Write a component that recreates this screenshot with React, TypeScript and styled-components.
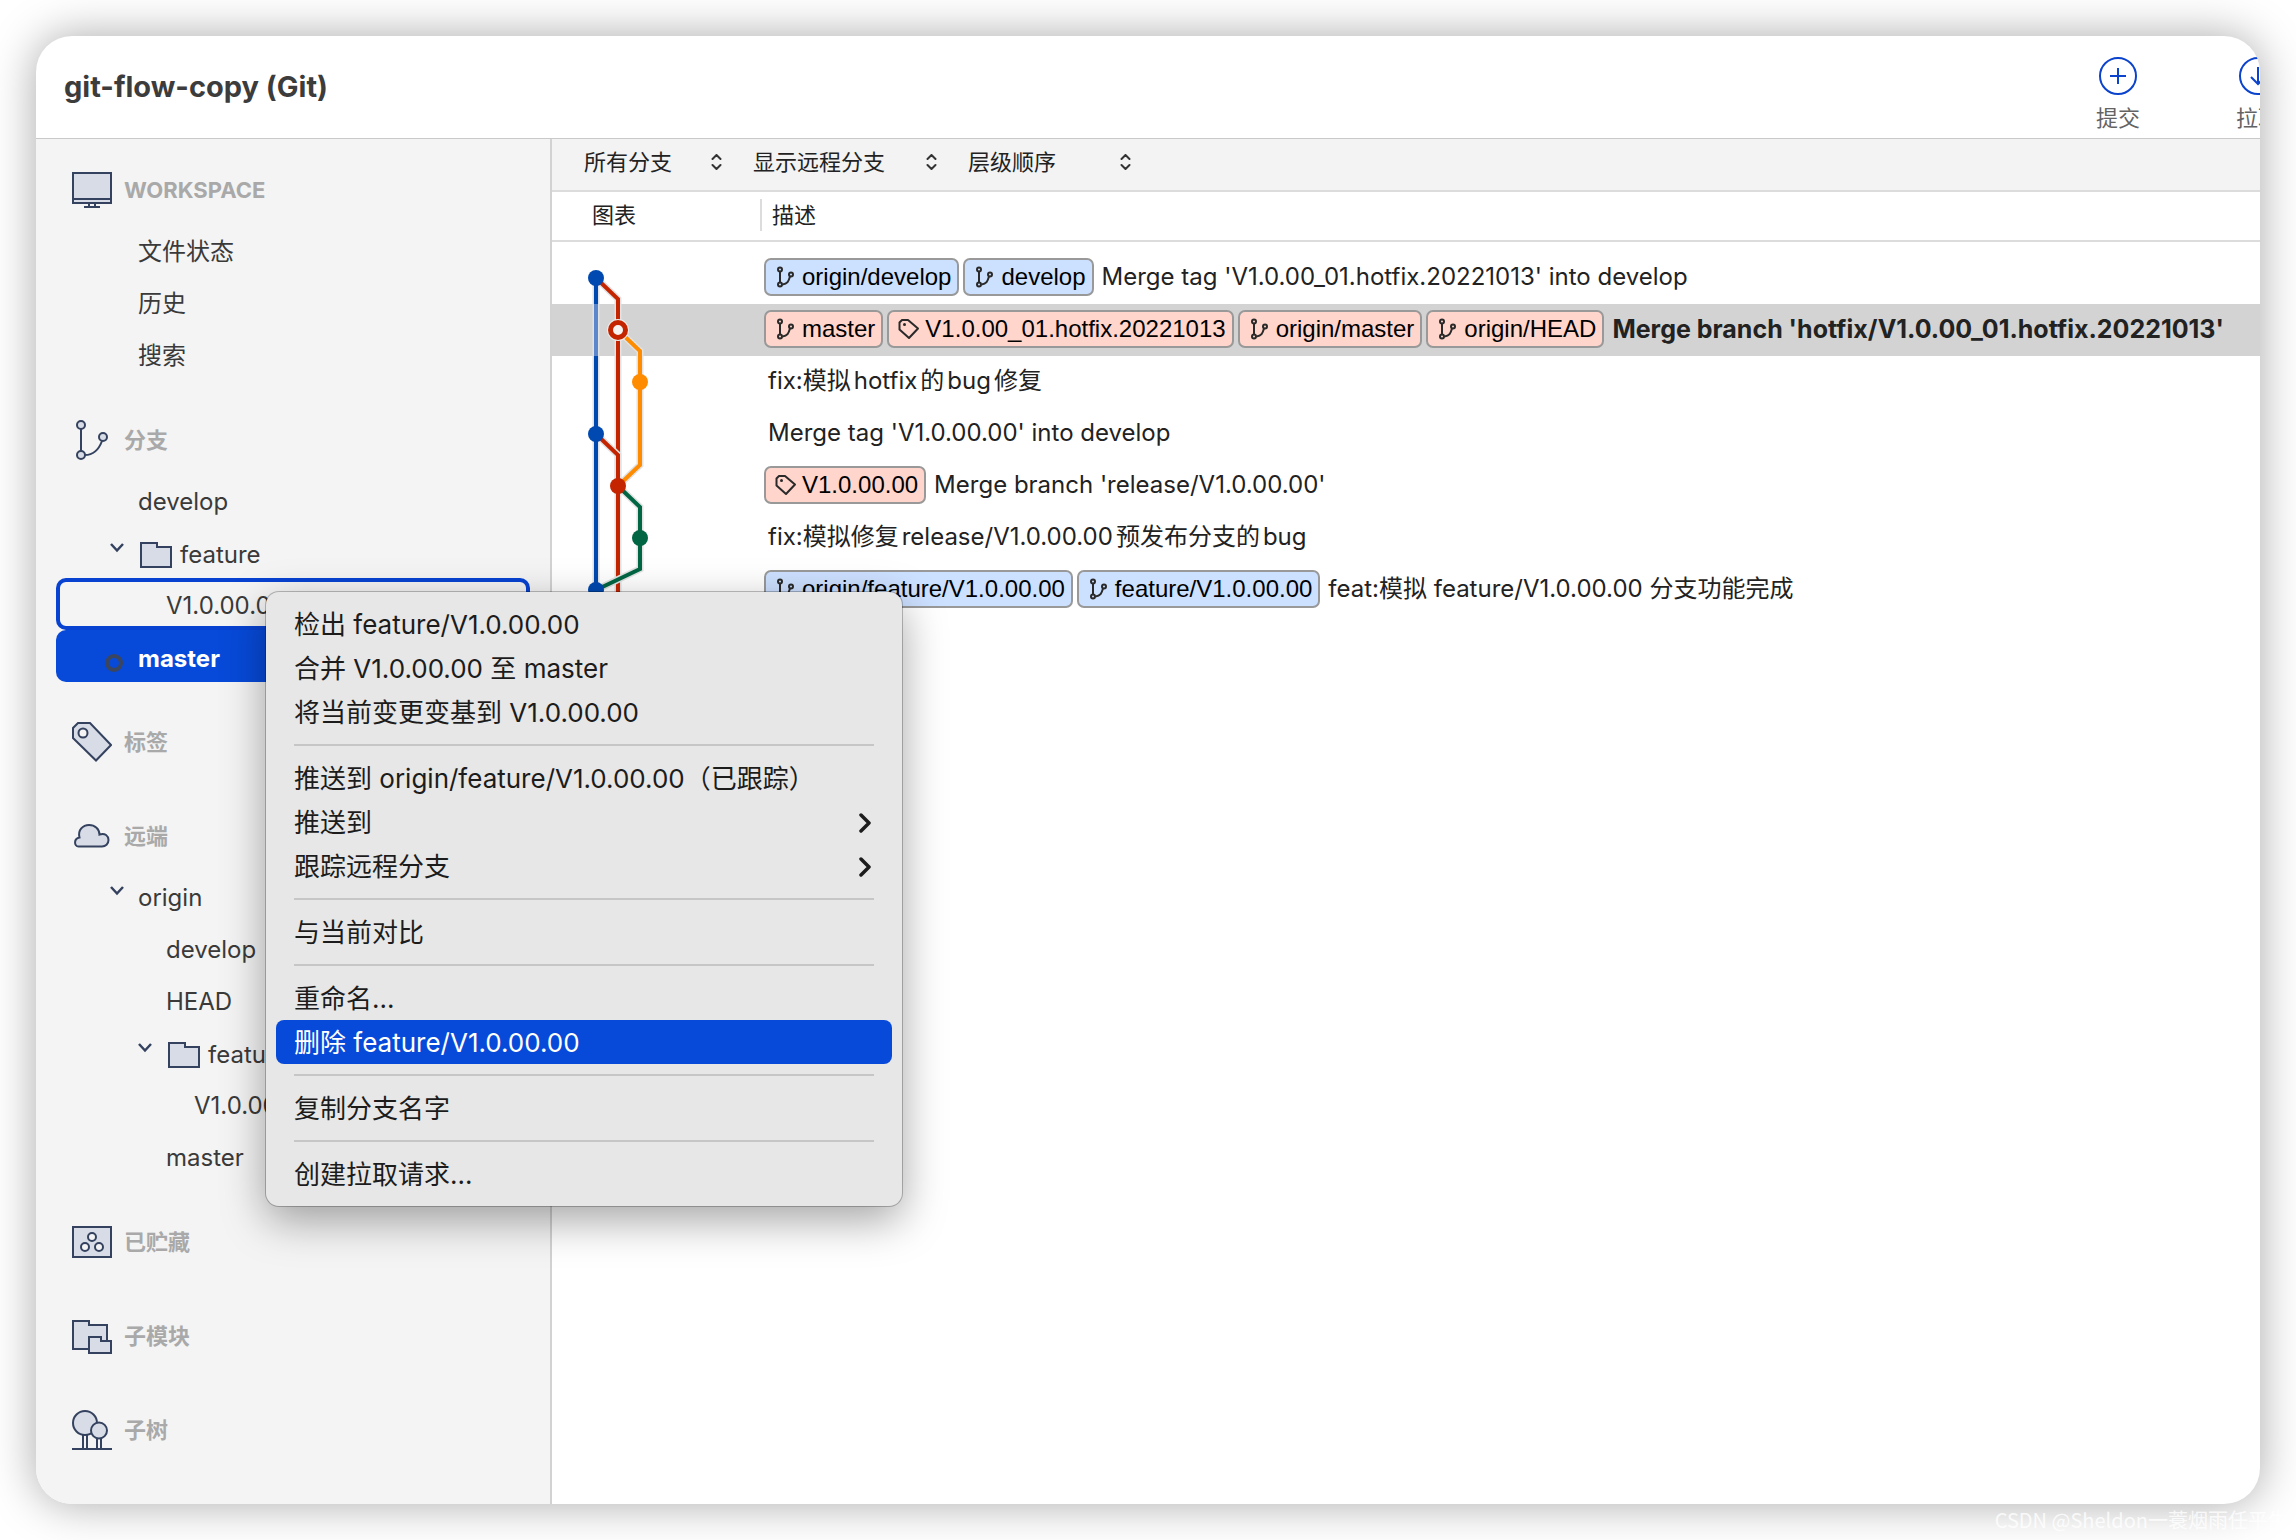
import React from "react";
import styled, { createGlobalStyle, css } from "styled-components";

const uiFont = `Inter, "Noto Sans CJK SC", sans-serif`;
const badgeFont = `"Liberation Sans", Arial, "Noto Sans CJK SC", sans-serif`;

const color = {
  blue: "#074ad9",
  outline: "#0742d1",
  iconStroke: "#34425f",
  iconFill: "#d8dce6",
  panel: "#f4f4f4",
  line: "#dcdcdc",
  graphBlue: "#0049b0",
  graphRed: "#c42500",
  graphOrange: "#ff8b00",
  graphGreen: "#006644",
};

const GlobalStyle = createGlobalStyle`
  *, *::before, *::after { box-sizing: border-box; }
  body { margin: 0; background: #fff; font-family: ${uiFont}; overflow-x: hidden; }
  button, select { font: inherit; color: inherit; border: 0; background: none; margin: 0; padding: 0; }
  ul { list-style: none; margin: 0; padding: 0; }
`;

const Page = styled.div`
  position: relative;
  min-height: 100vh;
  padding: 36px;
  display: flex;
`;

const Window = styled.div`
  position: relative;
  flex: 1;
  min-width: 0;
  display: flex;
  flex-direction: column;
  border-radius: 36px;
  background: #fff;
  box-shadow: 0 0 46px rgba(0, 0, 0, 0.34);
`;

const Header = styled.header`
  display: flex;
  align-items: flex-start;
  justify-content: space-between;
  height: 103px;
  padding-left: 28px;
  border-bottom: 1px solid #c9c9c9;
  border-top-right-radius: 36px;
  overflow: hidden;
`;

const Title = styled.h1`
  margin: 0;
  font-size: 29px;
  line-height: 102px;
  font-weight: 700;
  color: #3c3c3c;
`;

const Actions = styled.div`
  display: flex;
  gap: 96px;
  margin-right: -20px;
  padding-top: 20px;
`;

const Action = styled.button`
  display: flex;
  flex-direction: column;
  align-items: center;
  gap: 6px;
  width: 44px;
  font-size: 22px;
  line-height: 32px;
  color: #636363;
  white-space: nowrap;

  svg {
    display: block;
  }
`;

const Body = styled.div`
  flex: 1;
  display: flex;
  min-height: 0;
`;

const Sidebar = styled.nav`
  flex: none;
  width: 516px;
  display: flex;
  flex-direction: column;
  gap: 26px;
  padding: 17px 20px 40px;
  background: ${color.panel};
  border-right: 2px solid #d2d2d2;
  border-bottom-left-radius: 36px;
`;

const SectionTitle = styled.h2`
  display: flex;
  align-items: center;
  gap: 12px;
  height: 68px;
  margin: 0;
  padding-left: 16px;
  font-size: 22px;
  line-height: 28px;
  font-weight: 700;
  color: #a9a9a9;

  svg {
    flex: none;
  }
`;

const rowState = {
  none: css`
    color: #3a3a3a;
  `,
  outlined: css`
    color: #3a3a3a;
    box-shadow: inset 0 0 0 4px ${color.outline};
  `,
  current: css`
    color: #fff;
    font-weight: 700;
    background: ${color.blue};
  `,
};

const TreeRow = styled.button<{ $level: number; $state: keyof typeof rowState; $withIcon?: boolean }>`
  display: flex;
  align-items: center;
  width: 100%;
  height: 52px;
  padding-top: ${(p) => (p.$withIcon ? 6 : 3)}px;
  padding-left: ${(p) => 48 + p.$level * 28}px;
  border-radius: 10px;
  font-size: 24px;
  line-height: 32px;
  text-align: left;
  white-space: nowrap;
  ${(p) => rowState[p.$state]}
`;

const Marker = styled.span<{ $raised?: boolean }>`
  flex: none;
  display: flex;
  width: 34px;
  height: 32px;
  align-items: center;
  padding: ${(p) => (p.$raised ? "0 0 14px 5px" : "8px 0 0")};
`;

const FolderSlot = styled.span`
  flex: none;
  display: flex;
  width: 42px;
  padding-left: 2px;
`;

const Main = styled.main`
  flex: 1;
  min-width: 0;
`;

const FilterBar = styled.div`
  display: flex;
  align-items: center;
  gap: 31px;
  height: 53px;
  padding: 0 32px 5px;
  background: #f3f3f3;
  border-bottom: 2px solid ${color.line};
`;

const FilterBox = styled.label<{ $width: number }>`
  display: grid;
  grid-template-columns: 1fr 11px;
  align-items: center;
  width: ${(p) => p.$width}px;

  svg {
    grid-area: 1 / 2;
    pointer-events: none;
  }
`;

const FilterSelect = styled.select`
  grid-area: 1 / 1 / 2 / 3;
  appearance: none;
  height: 32px;
  font-size: 22px;
  color: #222;
`;

const Table = styled.table`
  width: 100%;
  table-layout: fixed;
  border-spacing: 0;
  color: #222;

  tbody::before {
    content: "";
    display: block;
    height: 10px;
  }
`;

const HeadCell = styled.th`
  height: 50px;
  padding: 0 0 2px;
  border-bottom: 2px solid ${color.line};
  font-size: 22px;
  line-height: 32px;
  font-weight: 400;
  text-align: left;
`;

const GraphHead = styled(HeadCell)`
  width: 208px;
  padding-left: 40px;
`;

const HeadLabel = styled.span`
  display: block;
  padding-left: 10px;
  border-left: 2px solid ${color.line};
`;

const CommitRow = styled.tr<{ $selected?: boolean }>`
  background: ${(p) => (p.$selected ? "#d3d3d3" : "transparent")};
`;

const GraphCell = styled.td`
  position: relative;
  height: 52px;
  padding: 0;
`;

const GraphSvg = styled.svg`
  position: absolute;
  z-index: 1;
  top: 0;
  left: 0;
`;

const CommitCell = styled.td`
  height: 52px;
  padding: 0 0 0 4px;
`;

const CommitLine = styled.div`
  display: flex;
  align-items: center;
  gap: 4px;
  padding-bottom: 2px;
  overflow: hidden;
  white-space: nowrap;
`;

const Badge = styled.span<{ $tone: "blue" | "red" }>`
  flex: none;
  display: flex;
  align-items: center;
  gap: 5px;
  height: 38px;
  padding: 0 6px 0 9px;
  border: 2px solid #999;
  border-radius: 7px;
  background: ${(p) => (p.$tone === "blue" ? "#cce0ff" : "#ffd5cc")};
  color: #000;
  font-family: ${badgeFont};
  font-size: 24px;
`;

const Message = styled.span<{ $strong?: boolean }>`
  padding-left: 4px;
  font-size: ${(p) => (p.$strong ? 25 : 24)}px;
  font-weight: ${(p) => (p.$strong ? 700 : 400)};
  line-height: 38px;
  text-autospace: normal;
`;

const Menu = styled.ul`
  position: absolute;
  z-index: 5;
  left: 230px;
  top: 556px;
  width: 636px;
  padding: 10px;
  border-radius: 13px;
  background: #e7e7e7;
  box-shadow: 0 0 0 1px rgba(0, 0, 0, 0.24), 0 14px 44px rgba(0, 0, 0, 0.36);
`;

const MenuButton = styled.button<{ $active?: boolean }>`
  display: flex;
  align-items: center;
  justify-content: space-between;
  width: 100%;
  height: 44px;
  padding: 2px 20px 0 18px;
  border-radius: 8px;
  font-size: 26px;
  line-height: 36px;
  white-space: nowrap;
  background: ${(p) => (p.$active ? color.blue : "transparent")};
  color: ${(p) => (p.$active ? "#fff" : "#1c1c1c")};
`;

const Separator = styled.li`
  height: 2px;
  margin: 10px 18px;
  background: #c6c6c6;
`;

const Watermark = styled.div`
  position: absolute;
  right: 8px;
  bottom: 4px;
  font-family: "Noto Sans CJK SC", sans-serif;
  font-size: 20px;
  line-height: 32px;
  color: rgba(255, 255, 255, 0.8);
`;

/* ---------- icons ---------- */

const SectionSvg = ({ children }: { children: React.ReactNode }) => (
  <svg width="40" height="40" viewBox="0 0 40 40" fill={color.iconFill} stroke={color.iconStroke} strokeWidth="2" aria-hidden="true">
    {children}
  </svg>
);

const MonitorIcon = () => (
  <SectionSvg>
    <rect x="1" y="3" width="38" height="30" />
    <path d="M1 29h38M12 37h16M17 33v4M23 33v4" fill="none" />
  </SectionSvg>
);

const BranchIcon = () => (
  <SectionSvg>
    <path d="M9 9v22M13 35c9 0 14-6 17-14" fill="none" />
    <circle cx="9" cy="5" r="4" />
    <circle cx="31" cy="17" r="4" />
    <circle cx="9" cy="35" r="4" />
  </SectionSvg>
);

const TagIcon = () => (
  <SectionSvg>
    <path d="M6 1h12l21 22-15 15.500L1 16V6z" />
    <circle cx="11" cy="11" r="4.500" fill={color.panel} />
  </SectionSvg>
);

const CloudIcon = () => (
  <SectionSvg>
    <path d="M6.500 30.500C2 30.500 1.500 22.500 7.500 21.500C5.500 14 11 9 17 9C23 9 27.500 13 27.500 18.500C33 16.500 36.500 20 36.500 24C36.500 28 33.500 30.500 30 30.500Z" />
  </SectionSvg>
);

const StashIcon = () => (
  <SectionSvg>
    <rect x="1" y="5" width="38" height="30" />
    <g fill={color.panel}>
      <circle cx="20" cy="15" r="4" />
      <circle cx="13" cy="25" r="4" />
      <circle cx="27" cy="25" r="4" />
    </g>
  </SectionSvg>
);

const SubmoduleIcon = () => (
  <SectionSvg>
    <path d="M1 5h16v4h18v24H1z" />
    <path d="M17 21h12v4h10v12H17z" />
  </SectionSvg>
);

const SubtreeIcon = () => (
  <SectionSvg>
    <path d="M11 25v14M15 25v14M25 28v11M29 28v11M0 39h40" fill="none" />
    <circle cx="13" cy="13" r="12" />
    <circle cx="27" cy="20.500" r="8" />
  </SectionSvg>
);

const FolderIcon = () => (
  <svg width="32" height="26" viewBox="0 0 32 26" fill={color.iconFill} stroke={color.iconStroke} strokeWidth="2" aria-hidden="true">
    <path d="M1 1h16v4h14v20H1z" />
  </svg>
);

const TreeChevron = () => (
  <svg width="16" height="10" viewBox="0 0 16 10" fill="none" stroke={color.iconStroke} strokeWidth="2.500" aria-hidden="true">
    <path d="M2 1l6 6.500L14 1" />
  </svg>
);

const CurrentDot = () => (
  <svg width="20" height="18" viewBox="0 0 20 18" fill="none" stroke="#3a4560" strokeWidth="4" aria-hidden="true">
    <circle cx="10" cy="9" r="7" />
  </svg>
);

const UpDownIcon = () => (
  <svg width="11" height="16" viewBox="0 0 11 16" fill="none" stroke="#333" strokeWidth="2" strokeLinecap="round" strokeLinejoin="round" aria-hidden="true">
    <path d="M1.500 5l4-4 4 4M1.500 11l4 4 4-4" />
  </svg>
);

const MenuChevron = () => (
  <svg width="14" height="20" viewBox="0 0 14 20" fill="none" stroke="#1c1c1c" strokeWidth="3.500" strokeLinecap="round" strokeLinejoin="round" aria-hidden="true">
    <path d="M3 2l8 8-8 8" />
  </svg>
);

const BadgeBranch = () => (
  <svg width="22" height="22" viewBox="0 0 22 22" fill="none" stroke="#2a2a2a" strokeWidth="2" aria-hidden="true">
    <path d="M5 6v10M7.500 18.500c5-.5 6-3 7.500-8" />
    <circle cx="5" cy="3.500" r="2" />
    <circle cx="16" cy="8.500" r="2" />
    <circle cx="5" cy="18.500" r="2" />
  </svg>
);

const BadgeTag = () => (
  <svg width="22" height="22" viewBox="0 0 22 22" fill="none" stroke="#2a2a2a" strokeWidth="2" strokeLinejoin="round" aria-hidden="true">
    <path d="M4 2h6l10 8.500-9 9.500L1.500 11.500V4.500z" />
    <circle cx="6.500" cy="6.500" r="1.500" fill="#2a2a2a" stroke="none" />
  </svg>
);

const CommitIcon = () => (
  <svg width="40" height="40" viewBox="0 0 40 40" fill="none" stroke="#0b43cc" strokeWidth="2" aria-hidden="true">
    <circle cx="20" cy="20" r="18" />
    <path d="M20 12v16M12 20h16" />
  </svg>
);

const PullIcon = () => (
  <svg width="40" height="40" viewBox="0 0 40 40" fill="none" stroke="#0b43cc" strokeWidth="2" aria-hidden="true">
    <circle cx="20" cy="20" r="18" />
    <path d="M20 11v17M13 21l7 7 7-7" />
  </svg>
);

/* ---------- commit graph: lanes at x 44 / 66 / 88, one node per 52px row ---------- */

const lane = { a: 44, b: 66, c: 88 };
const nodeY = (row: number) => 26 + row * 52;

const strokes = [
  { d: `M${lane.a} 26V338`, color: color.graphBlue },
  { d: `M${lane.b} 78V364`, color: color.graphRed },
  { d: `M${lane.a} 26L${lane.b} 47V78`, color: color.graphRed },
  { d: `M${lane.b} 78L${lane.c} 99V213L${lane.b} 234`, color: color.graphOrange },
  { d: `M${lane.a} 182L${lane.b} 203V234`, color: color.graphRed },
  { d: `M${lane.b} 234L${lane.c} 255V317L${lane.a} 338`, color: color.graphGreen },
];

const nodes = [
  { x: lane.a, row: 0, color: color.graphBlue },
  { x: lane.c, row: 2, color: color.graphOrange },
  { x: lane.a, row: 3, color: color.graphBlue },
  { x: lane.b, row: 4, color: color.graphRed },
  { x: lane.c, row: 5, color: color.graphGreen },
  { x: lane.a, row: 6, color: color.graphBlue },
];

const CommitGraph = () => (
  <GraphSvg width="120" height="364" viewBox="0 0 120 364" fill="none" aria-hidden="true">
    {strokes.map((s) => (
      <g key={s.d}>
        <path d={s.d} stroke="#e2e2e2" strokeWidth="7" />
        <path d={s.d} stroke={s.color} strokeWidth="4" />
      </g>
    ))}
    <path d={`M${lane.a} 52V104`} stroke="#5c87cc" strokeWidth="4" />
    {nodes.map((n) => (
      <circle key={n.row} cx={n.x} cy={nodeY(n.row)} r="8" fill={n.color} />
    ))}
    <circle cx={lane.b} cy={nodeY(1)} r="11" fill="#ececec" />
    <circle cx={lane.b} cy={nodeY(1)} r="7.500" fill="#f6f3f2" stroke={color.graphRed} strokeWidth="5" />
  </GraphSvg>
);

/* ---------- data ---------- */

type Item = { label: string; level: number; open?: boolean; folder?: boolean; state?: keyof typeof rowState };
type Section = { title: string; icon: React.FC; items?: Item[] };

const sections: Section[] = [
  {
    title: "WORKSPACE",
    icon: MonitorIcon,
    items: [
      { label: "文件状态", level: 0 },
      { label: "历史", level: 0 },
      { label: "搜索", level: 0 },
    ],
  },
  {
    title: "分支",
    icon: BranchIcon,
    items: [
      { label: "develop", level: 0 },
      { label: "feature", level: 0, open: true, folder: true },
      { label: "V1.0.00.00", level: 1, state: "outlined" },
      { label: "master", level: 0, state: "current" },
    ],
  },
  { title: "标签", icon: TagIcon },
  {
    title: "远端",
    icon: CloudIcon,
    items: [
      { label: "origin", level: 0, open: true },
      { label: "develop", level: 1 },
      { label: "HEAD", level: 1 },
      { label: "feature", level: 1, open: true, folder: true },
      { label: "V1.0.00.00", level: 2 },
      { label: "master", level: 1 },
    ],
  },
  { title: "已贮藏", icon: StashIcon },
  { title: "子模块", icon: SubmoduleIcon },
  { title: "子树", icon: SubtreeIcon },
];

type Ref = { kind: "branch" | "tag"; tone: "blue" | "red"; name: string };
type Commit = { refs: Ref[]; message: string; selected?: boolean };

const commits: Commit[] = [
  {
    refs: [
      { kind: "branch", tone: "blue", name: "origin/develop" },
      { kind: "branch", tone: "blue", name: "develop" },
    ],
    message: "Merge tag 'V1.0.00_01.hotfix.20221013' into develop",
  },
  {
    refs: [
      { kind: "branch", tone: "red", name: "master" },
      { kind: "tag", tone: "red", name: "V1.0.00_01.hotfix.20221013" },
      { kind: "branch", tone: "red", name: "origin/master" },
      { kind: "branch", tone: "red", name: "origin/HEAD" },
    ],
    message: "Merge branch 'hotfix/V1.0.00_01.hotfix.20221013'",
    selected: true,
  },
  { refs: [], message: "fix:模拟hotfix的bug修复" },
  { refs: [], message: "Merge tag 'V1.0.00.00' into develop" },
  { refs: [{ kind: "tag", tone: "red", name: "V1.0.00.00" }], message: "Merge branch 'release/V1.0.00.00'" },
  { refs: [], message: "fix:模拟修复release/V1.0.00.00预发布分支的bug" },
  {
    refs: [
      { kind: "branch", tone: "blue", name: "origin/feature/V1.0.00.00" },
      { kind: "branch", tone: "blue", name: "feature/V1.0.00.00" },
    ],
    message: "feat:模拟 feature/V1.0.00.00 分支功能完成",
  },
];

const filters = [
  { label: "所有分支", width: 138 },
  { label: "显示远程分支", width: 184 },
  { label: "层级顺序", width: 163 },
];

type MenuEntry = { label: string; submenu?: boolean; active?: boolean };

const menuGroups: MenuEntry[][] = [
  [{ label: "检出 feature/V1.0.00.00" }, { label: "合并 V1.0.00.00 至 master" }, { label: "将当前变更变基到 V1.0.00.00" }],
  [
    { label: "推送到 origin/feature/V1.0.00.00（已跟踪）" },
    { label: "推送到", submenu: true },
    { label: "跟踪远程分支", submenu: true },
  ],
  [{ label: "与当前对比" }],
  [{ label: "重命名..." }, { label: "删除 feature/V1.0.00.00", active: true }],
  [{ label: "复制分支名字" }],
  [{ label: "创建拉取请求..." }],
];

/* ---------- view ---------- */

const TreeItem = ({ item }: { item: Item }) => (
  <li>
    <TreeRow
      type="button"
      $level={item.level}
      $state={item.state ?? "none"}
      $withIcon={item.folder || item.state === "current"}
    >
      <Marker $raised={item.open}>
        {item.open && <TreeChevron />}
        {item.state === "current" && <CurrentDot />}
      </Marker>
      {item.folder && (
        <FolderSlot>
          <FolderIcon />
        </FolderSlot>
      )}
      {item.label}
    </TreeRow>
  </li>
);

const ContextMenu = () => (
  <Menu role="menu">
    {menuGroups.map((group, index) => (
      <React.Fragment key={index}>
        {index > 0 && <Separator role="separator" />}
        {group.map((entry) => (
          <li key={entry.label} role="none">
            <MenuButton type="button" role="menuitem" $active={entry.active}>
              {entry.label}
              {entry.submenu && <MenuChevron />}
            </MenuButton>
          </li>
        ))}
      </React.Fragment>
    ))}
  </Menu>
);

export default function App() {
  return (
    <Page>
      <GlobalStyle />
      <Window>
        <Header>
          <Title>git-flow-copy (Git)</Title>
          <Actions>
            <Action type="button">
              <CommitIcon />
              提交
            </Action>
            <Action type="button">
              <PullIcon />
              拉取
            </Action>
          </Actions>
        </Header>
        <Body>
          <Sidebar>
            {sections.map(({ title, icon: Icon, items }) => (
              <section key={title}>
                <SectionTitle>
                  <Icon />
                  {title}
                </SectionTitle>
                {items && (
                  <ul>
                    {items.map((item, i) => (
                      <TreeItem key={i} item={item} />
                    ))}
                  </ul>
                )}
              </section>
            ))}
          </Sidebar>
          <Main>
            <FilterBar>
              {filters.map((f) => (
                <FilterBox key={f.label} $width={f.width}>
                  <FilterSelect aria-label={f.label}>
                    <option>{f.label}</option>
                  </FilterSelect>
                  <UpDownIcon />
                </FilterBox>
              ))}
            </FilterBar>
            <Table>
              <thead>
                <tr>
                  <GraphHead>图表</GraphHead>
                  <HeadCell>
                    <HeadLabel>描述</HeadLabel>
                  </HeadCell>
                </tr>
              </thead>
              <tbody>
                {commits.map((commit, i) => (
                  <CommitRow key={i} $selected={commit.selected}>
                    <GraphCell>{i === 0 && <CommitGraph />}</GraphCell>
                    <CommitCell>
                      <CommitLine>
                        {commit.refs.map((ref) => (
                          <Badge key={ref.name} $tone={ref.tone}>
                            {ref.kind === "tag" ? <BadgeTag /> : <BadgeBranch />}
                            {ref.name}
                          </Badge>
                        ))}
                        <Message $strong={commit.selected}>{commit.message}</Message>
                      </CommitLine>
                    </CommitCell>
                  </CommitRow>
                ))}
              </tbody>
            </Table>
          </Main>
        </Body>
        <ContextMenu />
      </Window>
      <Watermark>CSDN @Sheldon一蓑烟雨任平生</Watermark>
    </Page>
  );
}
